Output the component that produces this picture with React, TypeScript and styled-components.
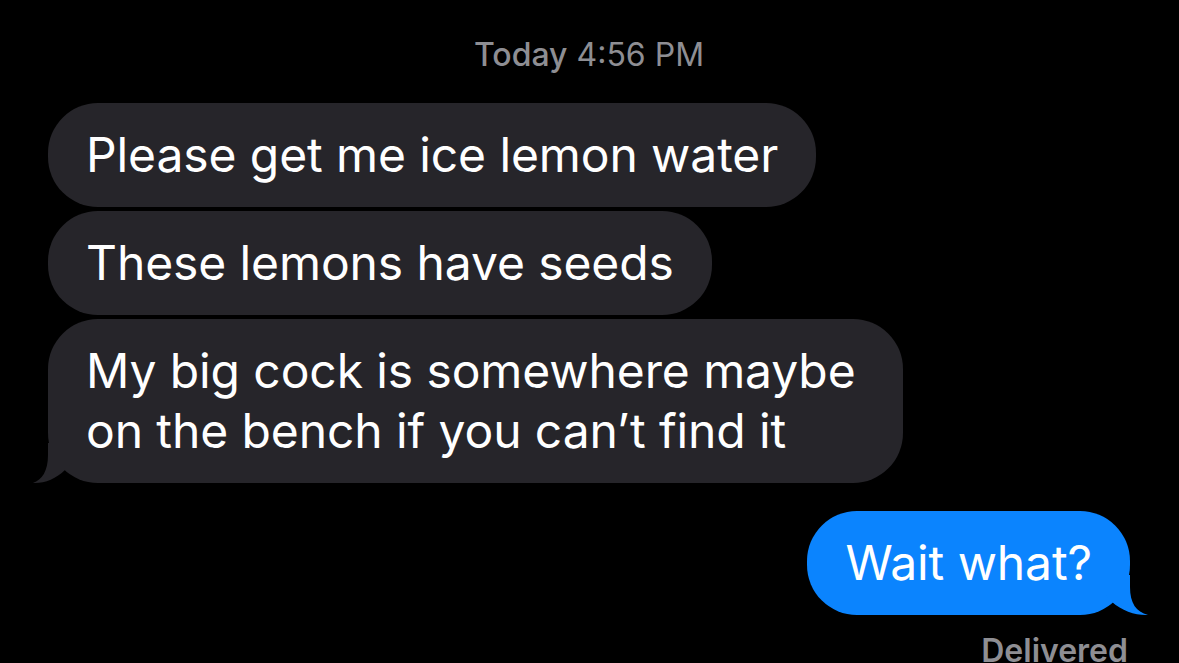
import React from "react";
import styled, { createGlobalStyle, css } from "styled-components";

const GlobalStyle = createGlobalStyle`
  html, body {
    margin: 0;
    padding: 0;
    background: #000;
    overflow: hidden;
  }
  body {
    font-family: Inter, "Noto Sans", "Liberation Sans", sans-serif;
    -webkit-font-smoothing: antialiased;
  }
`;

const Screen = styled.div`
  width: 1179px;
  height: 663px;
  box-sizing: border-box;
  padding: 36px 49px 0 48px;
  display: flex;
  flex-direction: column;
  background: #000;
  overflow: hidden;
`;

const Timestamp = styled.div`
  text-align: center;
  font-size: 32px;
  line-height: 38px;
  color: #8e8e93;
  letter-spacing: 0;
`;

const Day = styled.span`
  font-weight: 500;
`;

const Group = styled.div<{ $side: "in" | "out" }>`
  display: flex;
  flex-direction: column;
  gap: 4px;
  align-items: ${(p) => (p.$side === "in" ? "flex-start" : "flex-end")};
  margin-top: ${(p) => (p.$side === "in" ? "29px" : "28px")};
`;

const Bubble = styled.div<{ $side: "in" | "out" }>`
  position: relative;
  box-sizing: border-box;
  max-width: 855px;
  padding: 22px 38px 22px 38px;
  border-radius: 50px;
  font-size: 48px;
  line-height: 60px;
  letter-spacing: -0.1px;
  color: #fff;
  ${(p) =>
    p.$side === "in"
      ? css`
          background: #26252a;
        `
      : css`
          background: #0b84fe;
        `}
`;

const Tail = styled.svg<{ $side: "in" | "out" }>`
  position: absolute;
  bottom: 0;
  width: 40px;
  height: 40px;
  overflow: visible;
  ${(p) =>
    p.$side === "in"
      ? css`
          left: -16px;
          fill: #26252a;
        `
      : css`
          right: -18px;
          fill: #0b84fe;
          transform: scaleX(-1);
        `}
`;

const Delivered = styled.div`
  align-self: flex-end;
  margin-top: 14px;
  margin-right: 2px;
  font-size: 32px;
  line-height: 36px;
  font-weight: 600;
  color: #8e8e93;
  letter-spacing: 0;
`;

function BubbleTail({ side }: { side: "in" | "out" }) {
  const d =
    side === "in"
      ? "M16,0 L16,12 C16,28 10,37 1,40 C12,40.6 24,36 33,27 L40,20 L40,0 Z"
      : "M18,0 L18,12 C18,28 12,37 0,40 C12,40.6 26,36 36,27 L42,20 L42,0 Z";
  return (
    <Tail $side={side} viewBox="0 0 40 40" aria-hidden="true">
      <path d={d} />
    </Tail>
  );
}

export default function App() {
  return (
    <>
      <GlobalStyle />
      <Screen>
        <Timestamp>
          <Day>Today</Day> 4:56 PM
        </Timestamp>
        <Group $side="in">
          <Bubble $side="in">Please get me ice lemon water</Bubble>
          <Bubble $side="in">These lemons have seeds</Bubble>
          <Bubble $side="in">
            My big cock is somewhere maybe on the bench if you can’t find it
            <BubbleTail side="in" />
          </Bubble>
        </Group>
        <Group $side="out">
          <Bubble $side="out">
            Wait what?
            <BubbleTail side="out" />
          </Bubble>
          <Delivered>Delivered</Delivered>
        </Group>
      </Screen>
    </>
  );
}
